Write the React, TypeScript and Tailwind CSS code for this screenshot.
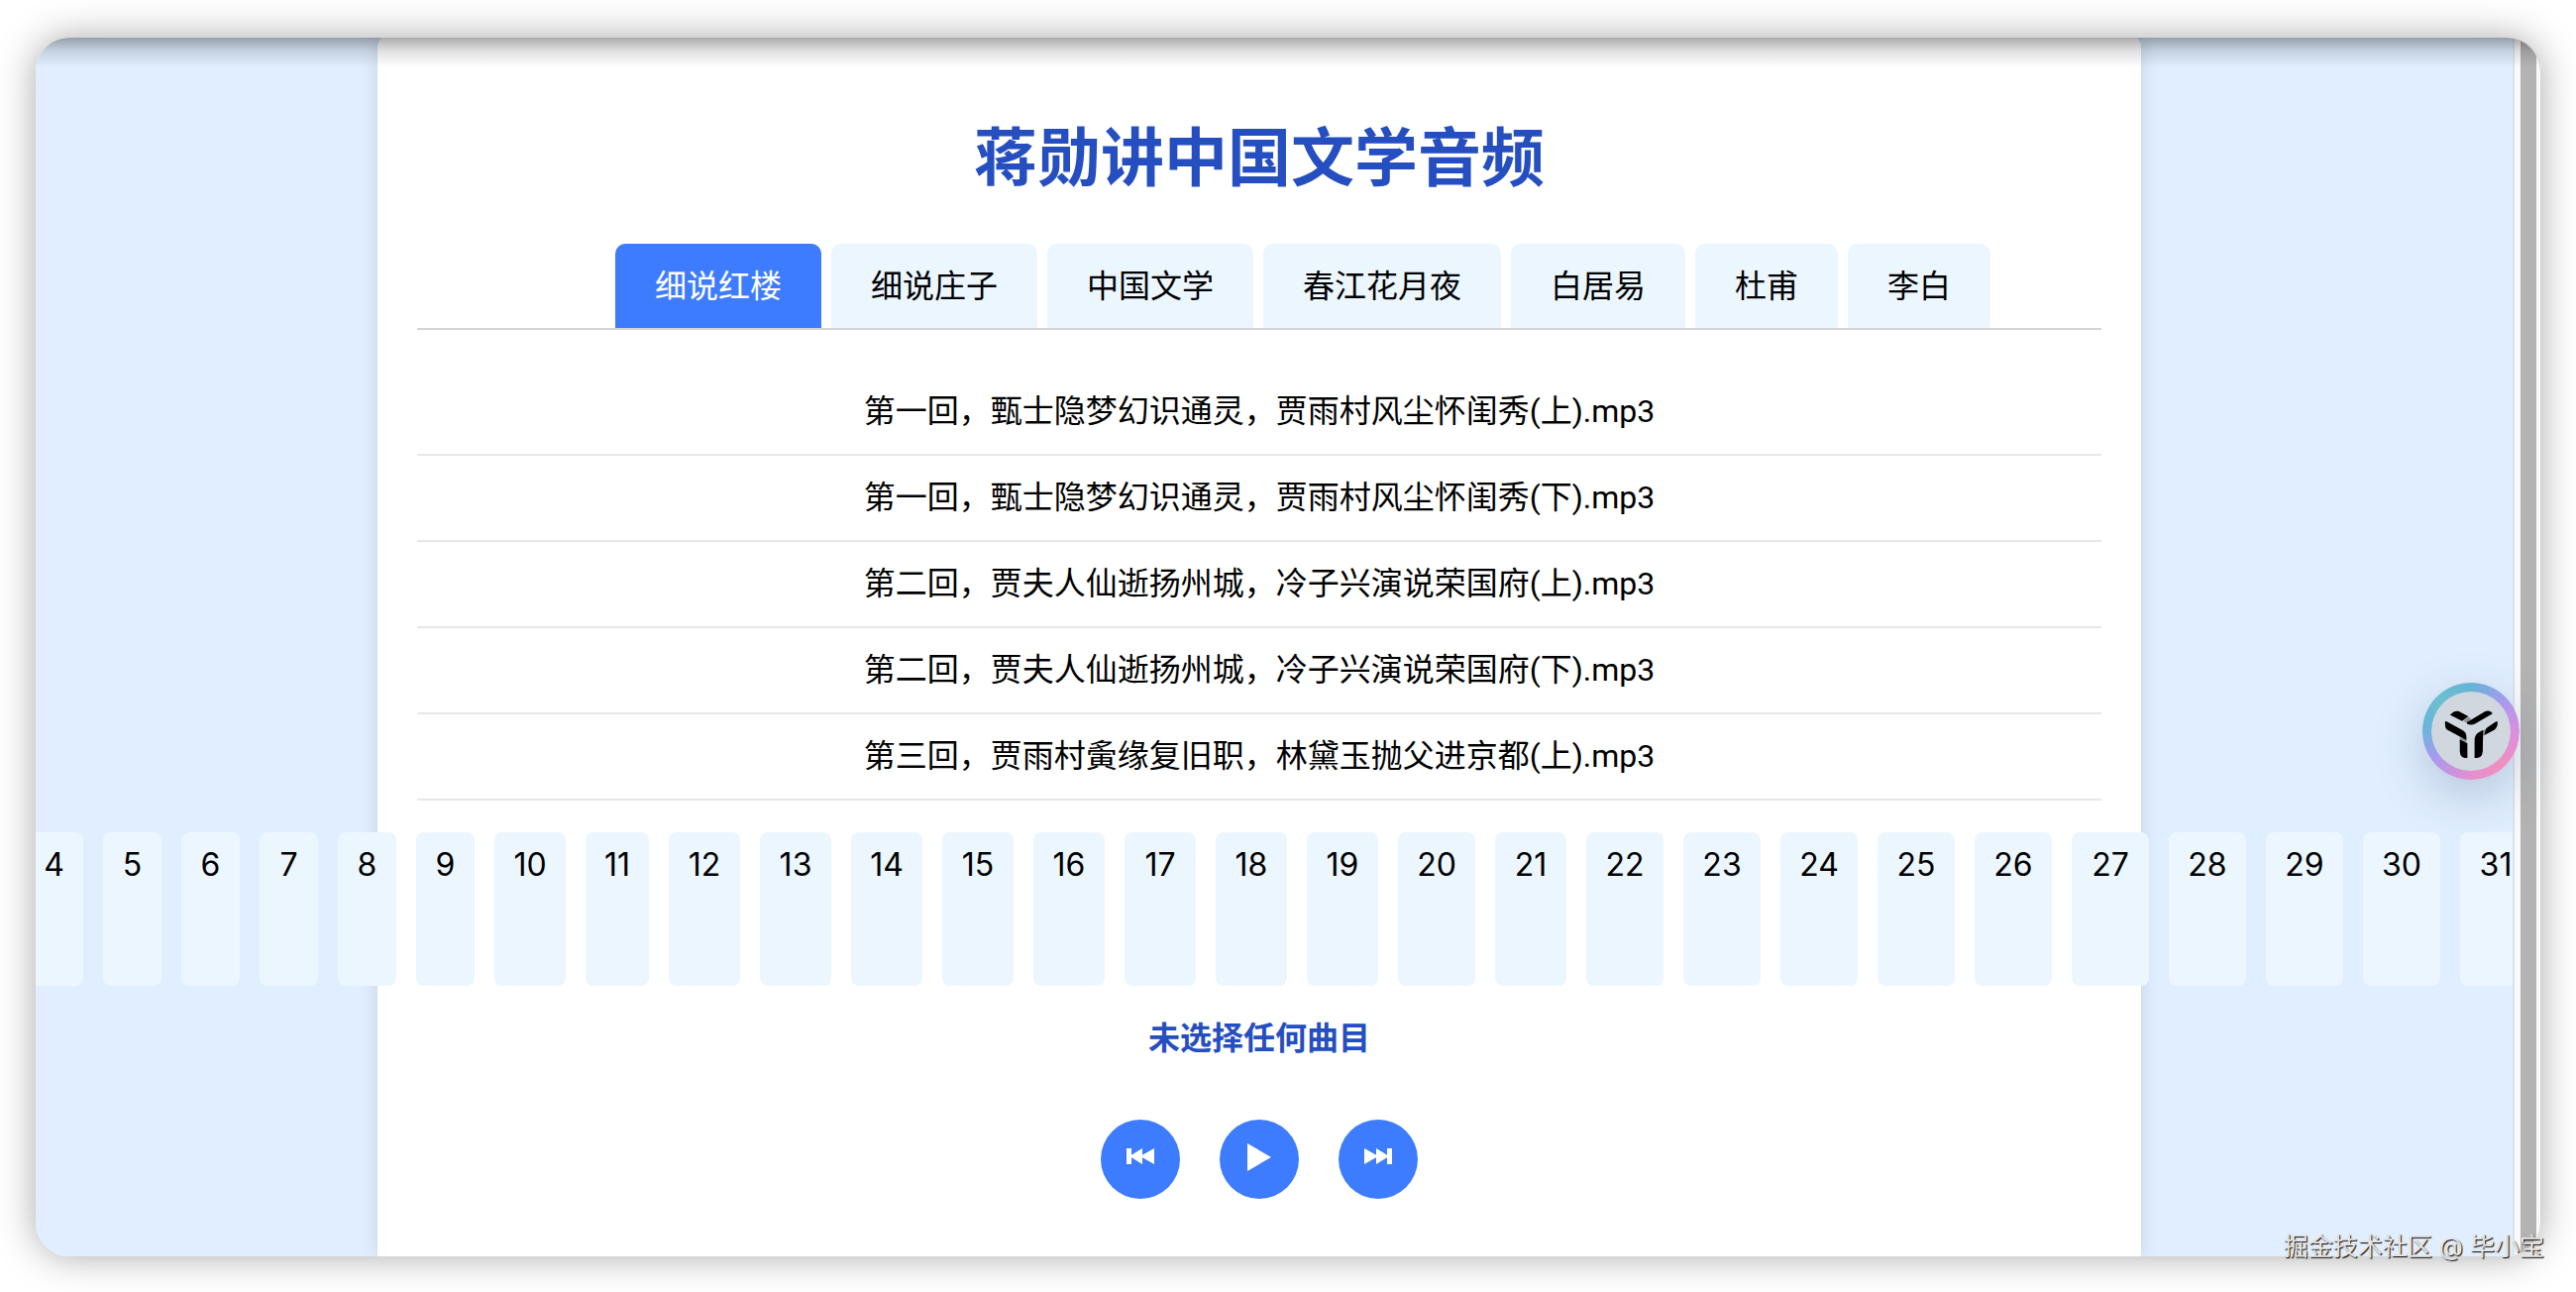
import { useState } from "react";

const tabs = ["细说红楼", "细说庄子", "中国文学", "春江花月夜", "白居易", "杜甫", "李白"];

const tracks = [
  "第一回，甄士隐梦幻识通灵，贾雨村风尘怀闺秀(上).mp3",
  "第一回，甄士隐梦幻识通灵，贾雨村风尘怀闺秀(下).mp3",
  "第二回，贾夫人仙逝扬州城，冷子兴演说荣国府(上).mp3",
  "第二回，贾夫人仙逝扬州城，冷子兴演说荣国府(下).mp3",
  "第三回，贾雨村夤缘复旧职，林黛玉抛父进京都(上).mp3",
];

const pages = Array.from({ length: 28 }, (_, i) => i + 4);

function pageWidth(n: number) {
  if (n < 10) return "w-[59px]";
  if (n === 11) return "w-16";
  if (n < 20 || n % 10 === 1) return "w-[72px]";
  return "w-[78px]";
}

function PrevIcon() {
  return (
    <svg viewBox="0 0 28 16" className="h-4 w-7" fill="currentColor" aria-hidden="true">
      <path d="M0 0h5v6.8L16 0v6.8L28 0v16L16 9.2V16L5 9.2V16H0z" />
    </svg>
  );
}

function NextIcon() {
  return (
    <svg viewBox="0 0 28 16" className="h-4 w-7" fill="currentColor" aria-hidden="true">
      <path d="M28 0h-5v6.8L12 0v6.8L0 0v16l12-6.8V16l11-6.8V16h5z" />
    </svg>
  );
}

function PlayIcon() {
  return (
    <svg viewBox="0 0 24 28" className="h-7 w-6" fill="currentColor" aria-hidden="true">
      <path d="M0 0l24 14L0 28z" />
    </svg>
  );
}

function AssistantMark() {
  return (
    <svg viewBox="220 172 242 242" className="size-20" aria-hidden="true">
      <path d="M318 262l15-13 8 6-8 17zM307 312l20 4v14l-20-6zM372 292l14-4-4 18-10 2z" fill="#8d9093" />
      <path d="M277 243l10-8q7-5 16-3l30 16-19 14z" />
      <path d="M329 266l54-33q5-3 11-2 9 1 13 8l-55 32q-12 5-23-1z" />
      <path d="M262 263q4-1 8 2l44 24q13 7 13 19v12l-56-30q-9-5-9-17z" />
      <path d="M422 263q2 18-10 26l-30 16 3-16q2-6 8-9l22-15q4-2 7-2z" />
      <path d="M307 319l23 11v45h-8q-14-2-15-20z" />
      <path d="M352 375v-55q0-14 10-22l16-9-1 64q-1 21-17 22z" />
    </svg>
  );
}

export default function App() {
  const [tab, setTab] = useState(0);

  return (
    <div className="relative min-h-screen bg-white px-9 pt-[38px] pb-9 font-[Inter,'Noto_Sans_CJK_SC',sans-serif] text-[32px] leading-[45px] text-black">
      <div className="relative flex h-[calc(100vh-74px)] overflow-hidden rounded-[34px] shadow-[0_0_38px_rgba(0,0,0,0.34)]">
        <div className="min-w-0 flex-1 overflow-hidden border-r-2 border-[#d9e2ec] bg-[#e0eeff] pr-[30px]">
          <main className="mx-auto -mt-1 flex min-h-[calc(100%+4px)] w-full max-w-[1780px] flex-col items-center rounded-t-[14px] bg-white px-10 pt-20 shadow-[0_0_20px_rgba(0,0,0,0.12)]">
            <h1 className="text-[64px] leading-[90px] font-bold text-[#254ec0]">蒋勋讲中国文学音频</h1>

            <nav className="mt-[42px] flex w-full justify-center gap-2.5 border-b-2 border-[#d2d4d8] pl-[88px]">
              {tabs.map((name, i) => (
                <button
                  key={name}
                  type="button"
                  onClick={() => setTab(i)}
                  className={
                    i === tab
                      ? "shrink-0 rounded-t-[10px] bg-[#3e7cff] px-10 py-5 text-white"
                      : "shrink-0 rounded-t-[10px] bg-[#ecf6ff] px-10 py-5"
                  }
                >
                  {name}
                </button>
              ))}
            </nav>

            <ul className="mt-10 w-full font-[Roboto,'Noto_Sans_CJK_SC',sans-serif]">
              {tracks.map((t) => (
                <li key={t} className="border-b-2 border-[#e7e7e7]">
                  <button type="button" className="w-full py-5 text-center">{t}</button>
                </li>
              ))}
            </ul>

            <div className="mt-8 flex w-[2492px] shrink-0 gap-5">
              {pages.map((n) => (
                <button
                  key={n}
                  type="button"
                  className={`flex h-[155px] shrink-0 items-start justify-center rounded-lg bg-[#ecf6ff] py-2.5 ${pageWidth(n)}`}
                >
                  {n}
                </button>
              ))}
            </div>

            <p className="mt-[30px] font-bold text-[#254ec0]">未选择任何曲目</p>

            <div className="mt-[60px] flex gap-10 text-white">
              <button type="button" aria-label="上一首" className="flex size-20 items-center justify-center rounded-full bg-[#3e7cff] pb-1.5">
                <PrevIcon />
              </button>
              <button type="button" aria-label="播放" className="flex size-20 items-center justify-center rounded-full bg-[#3e7cff] pb-1">
                <PlayIcon />
              </button>
              <button type="button" aria-label="下一首" className="flex size-20 items-center justify-center rounded-full bg-[#3e7cff] pb-1.5">
                <NextIcon />
              </button>
            </div>
          </main>
        </div>
        <div className="w-[26px] shrink-0 border-r-4 border-l-6 border-[#f9f9f9] bg-[#b3b3b3]" />
        <div className="pointer-events-none absolute inset-x-0 top-0 h-[30px] bg-linear-to-b from-black/33 via-black/12 via-45% to-transparent" />
      </div>

      <button
        type="button"
        aria-label="助手"
        className="absolute top-[689px] right-[57px] flex size-[98px] items-center justify-center rounded-full bg-[conic-gradient(#66b4d6,#a39bee_45deg,#d690e0_85deg,#f08fc0_135deg,#e58fd0_180deg,#a79aee_235deg,#69b5da_275deg,#6cbfd0_315deg,#66b4d6)] shadow-[0_16px_48px_rgba(60,80,110,0.25)]"
      >
        <span className="flex size-20 items-center justify-center rounded-full bg-[#d0d7df]">
          <AssistantMark />
        </span>
      </button>

      <p className="absolute right-8 bottom-[28px] text-[25px] leading-[36px] text-[#e6e6e6] [text-shadow:1px_1px_1px_#000]">
        掘金技术社区 @ 毕小宝
      </p>
    </div>
  );
}
